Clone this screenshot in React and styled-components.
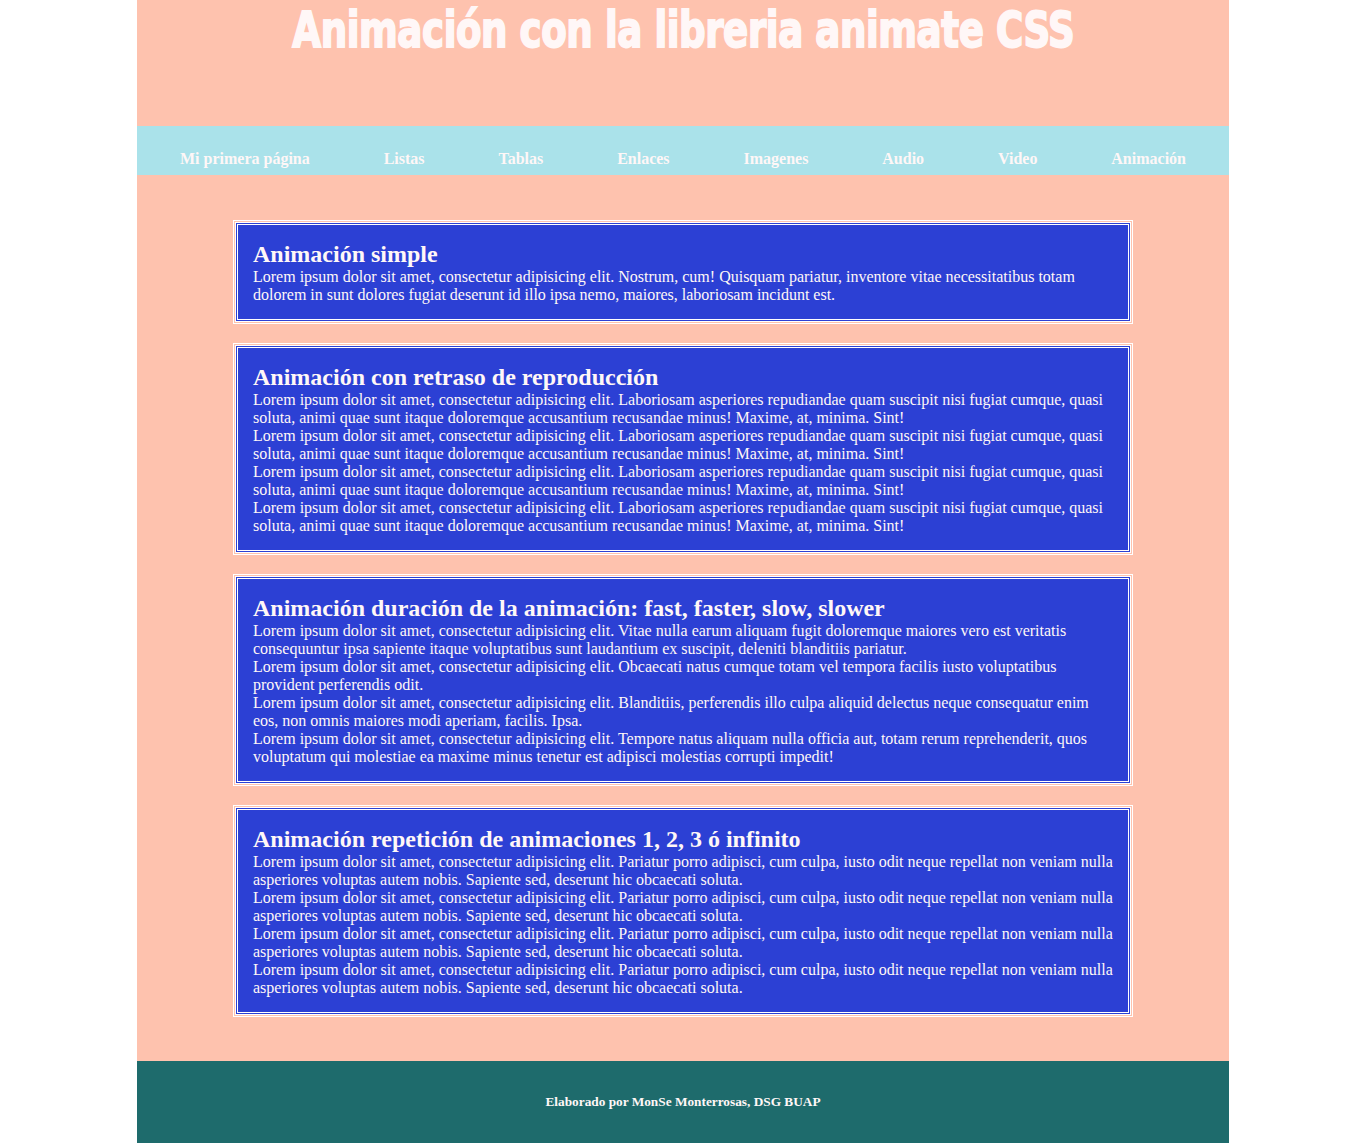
import React from "react";
import styled, { createGlobalStyle } from "styled-components";

const Global = createGlobalStyle`
  html, body { margin: 0; padding: 0; background: #ffffff; }
  body { font-family: "Liberation Serif", "Times New Roman", serif; }
`;

const Page = styled.div`
  width: 1092px;
  margin: 0 auto;
  background: #fec2ae;
`;

const Header = styled.header`
  height: 126px;
  display: flex;
  justify-content: center;
  align-items: flex-start;
`;

const Title = styled.h1`
  margin: 0;
  padding-top: 2px;
  font-family: Impact, "DejaVu Sans Condensed", "DejaVu Sans", sans-serif;
  font-weight: bold;
  font-size: 50px;
  line-height: 56px;
  color: #fff7f7;
  letter-spacing: -0.5px;
  white-space: nowrap;
  -webkit-text-stroke: 1.8px #fff7f7;
  transform: scaleX(0.826);
`;

const Nav = styled.nav`
  height: 49px;
  background: #aae2ea;
  display: flex;
  justify-content: space-around;
  align-items: flex-end;
  padding: 0 6px 7px;
  box-sizing: border-box;
`;

const NavLink = styled.a`
  font-family: "Liberation Serif", "Times New Roman", serif;
  font-weight: bold;
  font-size: 16px;
  line-height: 18px;
  color: #fff7f7;
  text-decoration: none;
`;

const Main = styled.main`
  display: flex;
  flex-direction: column;
  align-items: center;
  gap: 23px;
  padding: 47px 0 46px;
`;

const Card = styled.section`
  width: 896px;
  box-sizing: border-box;
  background: #2c40d4;
  border: 3px double #ffffff;
  outline: 1px solid #ffffff;
  outline-offset: 1px;
  padding: 15px;
  color: #fff7f7;
`;

const CardTitle = styled.h2`
  margin: 0;
  font-family: "Liberation Serif", "Times New Roman", serif;
  font-weight: bold;
  font-size: 24px;
  line-height: 28px;
`;

const Text = styled.p`
  margin: 0;
  font-family: "Liberation Serif", "Times New Roman", serif;
  font-size: 16px;
  line-height: 18px;
`;

const Footer = styled.footer`
  height: 82px;
  background: #1e6b6c;
  display: flex;
  justify-content: center;
  align-items: center;
`;

const FooterText = styled.p`
  margin: 0;
  font-family: "Liberation Serif", "Times New Roman", serif;
  font-weight: bold;
  font-size: 13.3px;
  color: #fff7f7;
`;

const nav = ["Mi primera página", "Listas", "Tablas", "Enlaces", "Imagenes", "Audio", "Video", "Animación"];

const p1 = "Lorem ipsum dolor sit amet, consectetur adipisicing elit. Nostrum, cum! Quisquam pariatur, inventore vitae necessitatibus totam dolorem in sunt dolores fugiat deserunt id illo ipsa nemo, maiores, laboriosam incidunt est.";
const p2 = "Lorem ipsum dolor sit amet, consectetur adipisicing elit. Laboriosam asperiores repudiandae quam suscipit nisi fugiat cumque, quasi soluta, animi quae sunt itaque doloremque accusantium recusandae minus! Maxime, at, minima. Sint!";
const p3 = [
  "Lorem ipsum dolor sit amet, consectetur adipisicing elit. Vitae nulla earum aliquam fugit doloremque maiores vero est veritatis consequuntur ipsa sapiente itaque voluptatibus sunt laudantium ex suscipit, deleniti blanditiis pariatur.",
  "Lorem ipsum dolor sit amet, consectetur adipisicing elit. Obcaecati natus cumque totam vel tempora facilis iusto voluptatibus provident perferendis odit.",
  "Lorem ipsum dolor sit amet, consectetur adipisicing elit. Blanditiis, perferendis illo culpa aliquid delectus neque consequatur enim eos, non omnis maiores modi aperiam, facilis. Ipsa.",
  "Lorem ipsum dolor sit amet, consectetur adipisicing elit. Tempore natus aliquam nulla officia aut, totam rerum reprehenderit, quos voluptatum qui molestiae ea maxime minus tenetur est adipisci molestias corrupti impedit!",
];
const p4 = "Lorem ipsum dolor sit amet, consectetur adipisicing elit. Pariatur porro adipisci, cum culpa, iusto odit neque repellat non veniam nulla asperiores voluptas autem nobis. Sapiente sed, deserunt hic obcaecati soluta.";

const cards = [
  { title: "Animación simple", paras: [p1] },
  { title: "Animación con retraso de reproducción", paras: [p2, p2, p2, p2] },
  { title: "Animación duración de la animación: fast, faster, slow, slower", paras: p3 },
  { title: "Animación repetición de animaciones 1, 2, 3 ó infinito", paras: [p4, p4, p4, p4] },
];

export default function App() {
  return (
    <>
      <Global />
      <Page>
        <Header>
          <Title>Animación con la libreria animate CSS</Title>
        </Header>
        <Nav>
          {nav.map((n) => (
            <NavLink key={n} href="#">{n}</NavLink>
          ))}
        </Nav>
        <Main>
          {cards.map((c) => (
            <Card key={c.title}>
              <CardTitle>{c.title}</CardTitle>
              {c.paras.map((t, i) => (
                <Text key={i}>{t}</Text>
              ))}
            </Card>
          ))}
        </Main>
        <Footer>
          <FooterText>Elaborado por MonSe Monterrosas, DSG BUAP</FooterText>
        </Footer>
      </Page>
    </>
  );
}
